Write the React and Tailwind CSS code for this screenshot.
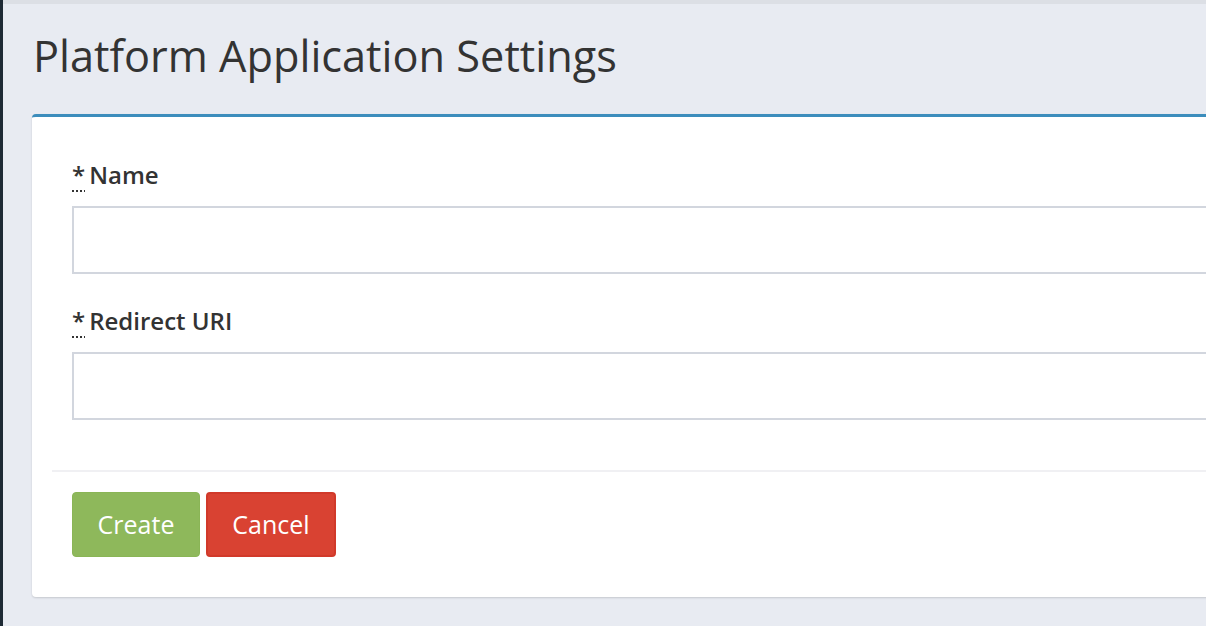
import React from "react";

function Field({ label }) {
  return (
    <div className="flex flex-col">
      <label className="flex items-end h-[28px] text-[24px] font-semibold text-[#333] leading-none">
        <span className="underline decoration-dotted decoration-[2px] underline-offset-[6px]">*</span>
        <span className="ml-[4px]">{label}</span>
      </label>
      <div className="mt-[19px] h-[68px] border-2 border-[#d2d6de] bg-white"></div>
    </div>
  );
}

export default function App() {
  return (
    <div
      className="w-[1206px] h-[626px] overflow-hidden bg-[#e8ebf2] border-l-[3px] border-[#1e2a35] flex flex-col"
      style={{ fontFamily: '"Open Sans", "Noto Sans", sans-serif' }}
    >
      <div className="h-[4px] bg-[#dcdfe5] shrink-0"></div>
      <div className="pl-[30px] pt-[22px] h-[110px] shrink-0">
        <h1 className="text-[43.3px] leading-[60px] text-[#333]">Platform Application Settings</h1>
      </div>
      <div className="ml-[29px] w-[1200px] shrink-0 bg-white border-t-[3px] border-[#3c8dbc] rounded-[4px] shadow-[0_1px_2px_rgba(0,0,0,0.15)]">
        <div className="pl-[40px] pt-[42px] pb-[50px] flex flex-col gap-[31px]">
          <Field label="Name" />
          <Field label="Redirect URI" />
        </div>
        <div className="ml-[20px] border-t-2 border-[#f0f0f3] pt-[20px] pb-[40px] pl-[20px] flex gap-[6px]">
          <button className="w-[128px] h-[65px] rounded-[4px] bg-[#8eb85b] border border-[#8ab556] text-white text-[25px]">Create</button>
          <button className="w-[130px] h-[65px] rounded-[4px] bg-[#d94232] border-2 border-[#d1392a] text-white text-[25px]">Cancel</button>
        </div>
      </div>
    </div>
  );
}
